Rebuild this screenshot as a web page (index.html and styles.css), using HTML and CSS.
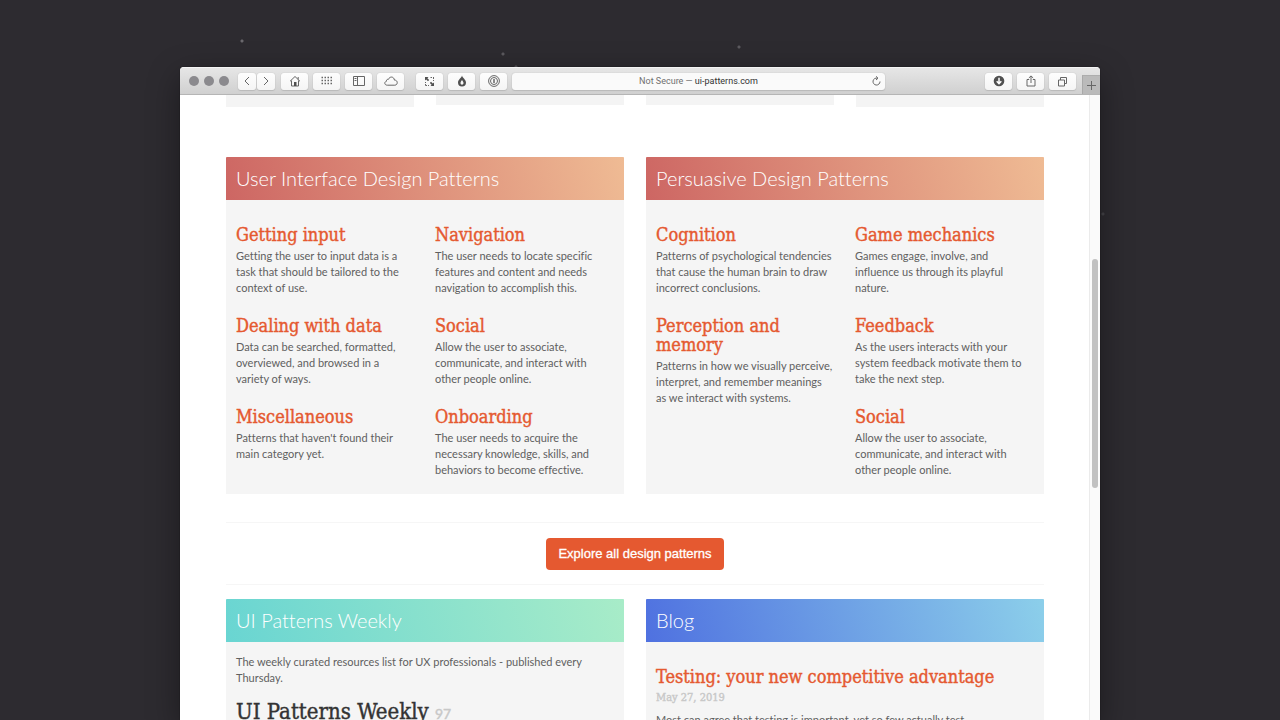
FILE: index.html
```html
<!DOCTYPE html>
<html lang="en">
<head>
<meta charset="utf-8">
<title>UI Patterns</title>
<link rel="stylesheet" href="styles.css">
</head>
<body>
<div class="desktop">
  <div class="window">
    <header class="toolbar">
      <div class="lights"><span></span><span></span><span></span></div>
      <div class="nav-pair">
        <button class="tool" aria-label="Back"><svg width="8" height="10" viewBox="0 0 8 10"><path d="M6 1 2 5l4 4"/></svg></button>
        <button class="tool" aria-label="Forward"><svg width="8" height="10" viewBox="0 0 8 10"><path d="m2 1 4 4-4 4"/></svg></button>
      </div>
      <div class="group">
        <button class="tool" aria-label="Home"><svg width="12" height="12" viewBox="0 0 12 12"><path d="M1 6.300 6 1.500l5 4.800M2.500 5.500V11h7V5.500M9.200 2v2.500"/><path class="solid" d="M5 7h2.500v4H5z"/></svg></button>
        <button class="tool" aria-label="Top sites"><svg width="12" height="10" viewBox="0 0 12 10"><path class="dots" d="M.5 1.500h11M.5 4.500h11M.5 7.500h11"/></svg></button>
        <button class="tool" aria-label="Sidebar"><svg width="12" height="10" viewBox="0 0 12 10"><path d="M.5.5h11v9H.5zM4.500.5v9M1.500 2.500h2M1.500 4.500h2"/></svg></button>
        <button class="tool" aria-label="iCloud tabs"><svg width="14" height="10" viewBox="0 0 14 10"><path d="M3.300 9.200C.4 9.200-.1 5.900 2.400 5.300 2.300 3.500 3.700 3 4.500 3.300 5.500.200 10 .200 10.400 4.100c3.700-.2 3.700 5.100.4 5.100z"/></svg></button>
      </div>
      <div class="group extensions">
        <button class="tool" aria-label="Full page"><svg width="11" height="11" viewBox="0 0 11 11"><path class="solid" d="M1 1h3.500L3.400 2.200 5.200 4 4 5.200 2.200 3.400 1 4.500zM10 10H6.500l1.100-1.200L5.800 7 7 5.800l1.800 1.800L10 6.500z"/><path d="M6.500 1.500H8M9.500 1v2M9.500 4v1M1.500 6v1M1.500 8v1.500H3M4 9.500h1"/></svg></button>
        <button class="tool" aria-label="Raindrop"><svg width="10" height="12" viewBox="0 0 10 12"><path class="solid" fill-rule="evenodd" d="M5 .5C5.500 3 9 4.500 9 7.600a4 4 0 0 1-8 0C1 4.500 4.500 3 5 .5zM5 5C4.300 6 3.500 7 3.500 8.100c0 2.200 3 2.200 3 0C6.500 7 5.700 6 5 5z"/></svg></button>
        <button class="tool" aria-label="1Password"><svg width="12" height="12" viewBox="0 0 12 12"><circle cx="6" cy="6" r="5.400"/><circle cx="6" cy="6" r="3.500"/><path class="bar" d="M6 4v4"/></svg></button>
      </div>
      <div class="address">
        <button class="location"><span>Not Secure — </span>ui-patterns.com</button>
        <button class="reload" aria-label="Reload"><svg width="9" height="10" viewBox="0 0 9 10"><path d="M5.500 2.200A3.500 3.500 0 1 0 8 5.500M4 .3l2 1.900-2 1.800"/></svg></button>
      </div>
      <div class="group actions">
        <button class="tool" aria-label="Downloads"><svg width="12" height="12" viewBox="0 0 12 12"><circle class="solid" cx="6" cy="6" r="5.300"/><path class="arrow" d="M6 2.800v5.500M3.700 6.300 6 8.700l2.300-2.400"/></svg></button>
        <button class="tool" aria-label="Share"><svg width="10" height="12" viewBox="0 0 10 12"><path d="M3.200 4.500H1v6.500h8V4.500H6.800M5 8V1M2.800 3 5 .9 7.200 3"/></svg></button>
        <button class="tool" aria-label="Show tabs"><svg width="11" height="11" viewBox="0 0 11 11"><path d="M1.500 4h6v6h-6zM3.500 4V1.500h6v6h-2"/></svg></button>
      </div>
      <button class="new-tab" aria-label="New tab"><svg width="9" height="9" viewBox="0 0 9 9"><path d="M4.500 0v9M0 4.500h9"/></svg></button>
    </header>

    <div class="viewport">
      <main class="page">
        <div class="previous"><div class="tile tall"></div><div class="tile"></div><div class="tile"></div><div class="tile tall"></div></div>

        <div class="row">
          <section class="card">
            <h2 class="card-title coral">User Interface Design Patterns</h2>
            <div class="columns">
              <div class="column">
                <article><h3><a href="#">Getting input</a></h3><p>Getting the user to input data is a task that should be tailored to the context of use.</p></article>
                <article><h3><a href="#">Dealing with data</a></h3><p>Data can be searched, formatted, overviewed, and browsed in a variety of ways.</p></article>
                <article><h3><a href="#">Miscellaneous</a></h3><p>Patterns that haven't found their main category yet.</p></article>
              </div>
              <div class="column">
                <article><h3><a href="#">Navigation</a></h3><p>The user needs to locate specific features and content and needs navigation to accomplish this.</p></article>
                <article><h3><a href="#">Social</a></h3><p>Allow the user to associate, communicate, and interact with other people online.</p></article>
                <article><h3><a href="#">Onboarding</a></h3><p>The user needs to acquire the necessary knowledge, skills, and behaviors to become effective.</p></article>
              </div>
            </div>
          </section>
          <section class="card">
            <h2 class="card-title coral">Persuasive Design Patterns</h2>
            <div class="columns">
              <div class="column">
                <article><h3><a href="#">Cognition</a></h3><p>Patterns of psychological tendencies that cause the human brain to draw incorrect conclusions.</p></article>
                <article><h3><a href="#">Perception and memory</a></h3><p>Patterns in how we visually perceive, interpret, and remember meanings as we interact with systems.</p></article>
              </div>
              <div class="column">
                <article><h3><a href="#">Game mechanics</a></h3><p>Games engage, involve, and influence us through its playful nature.</p></article>
                <article><h3><a href="#">Feedback</a></h3><p>As the users interacts with your system feedback motivate them to take the next step.</p></article>
                <article><h3><a href="#">Social</a></h3><p>Allow the user to associate, communicate, and interact with other people online.</p></article>
              </div>
            </div>
          </section>
        </div>

        <div class="explore"><a class="cta" href="#">Explore all design patterns</a></div>

        <div class="row">
          <section class="card">
            <h2 class="card-title teal">UI Patterns Weekly</h2>
            <div class="weekly">
              <p>The weekly curated resources list for UX professionals - published every Thursday.</p>
              <h3 class="issue">UI Patterns Weekly <small>97</small></h3>
            </div>
          </section>
          <section class="card">
            <h2 class="card-title blue">Blog</h2>
            <article class="post">
              <h3><a href="#">Testing: your new competitive advantage</a></h3>
              <time datetime="2019-05-27">May 27, 2019</time>
              <p>Most can agree that testing is important, yet so few actually test.</p>
            </article>
          </section>
        </div>
      </main>
      <div class="scrollbar"><div class="thumb"></div></div>
    </div>
  </div>
</div>
</body>
</html>
```
FILE: styles.css
```css
* { box-sizing: border-box; }
body { margin: 0; background: #2d2b30; }
h2, h3, p { margin: 0; }
button { font: inherit; margin: 0; padding: 0; border: 0; }
a { color: inherit; text-decoration: none; }

.desktop {
  height: 100vh;
  padding: 67px 180px 0;
  overflow: hidden;
  display: flex;
  background:
    radial-gradient(circle at 242px 41px, #6b696e 1px, transparent 2px),
    radial-gradient(circle at 503px 54px, #5b595e 1px, transparent 2px),
    radial-gradient(circle at 516px 67px, #5b595e 1px, transparent 2px),
    radial-gradient(circle at 739px 47px, #5b595e 1px, transparent 2px),
    radial-gradient(circle at 1103px 214px, #454348 1px, transparent 2px),
    #2d2b30;
}
.window {
  flex: 1;
  min-width: 0;
  display: flex;
  flex-direction: column;
  border-radius: 4px 4px 0 0;
  overflow: hidden;
  background: #fff;
  box-shadow: 0 10px 32px rgba(0, 0, 0, .4), 0 0 1px #000;
}

/* Browser toolbar */
.toolbar {
  flex: none;
  display: flex;
  align-items: center;
  height: 28px;
  padding-left: 9px;
  background: linear-gradient(#e6e6e6, #d0d0d0);
  border-top: 1px solid #f4f4f4;
  border-bottom: 1px solid #b5b5b5;
}
.lights { display: flex; gap: 5px; margin-right: 9px; }
.lights span { width: 10px; height: 10px; border-radius: 50%; background: #8b8a8e; }
.nav-pair { display: flex; gap: 1px; margin-right: 6px; }
.nav-pair .tool { width: 18px; }
.group { display: flex; gap: 5px; }
.tool {
  display: flex;
  align-items: center;
  justify-content: center;
  width: 27px;
  height: 17px;
  border-radius: 3px;
  background: linear-gradient(#fdfdfd, #f5f5f5);
  box-shadow: 0 0 1px #aaa, 0 1px 1px #bbb;
}
.toolbar svg { display: block; fill: none; stroke: #666; stroke-width: 1; }
.toolbar .solid { fill: #505050; stroke: none; }
.toolbar .dots { stroke-width: 1.5; stroke-dasharray: 1.5 1.5; }
.toolbar .bar { stroke-width: 1.5; }
.toolbar .arrow { stroke: #fff; stroke-width: 1.5; }
.extensions { margin: 0 5px 0 12px; }
.address {
  flex: 1;
  display: flex;
  align-items: center;
  height: 17px;
  padding: 0 4px 0 13px;
  border-radius: 3px;
  background: #fafafa;
  box-shadow: 0 0 1px #aaa, 0 1px 1px #bbb;
}
.location { flex: 1; background: none; color: #333; font: 9px/17px Roboto, "Liberation Sans", sans-serif; }
.location span { color: #707070; }
.reload { background: none; }
.actions { margin: 0 6px 0 100px; }
.new-tab {
  align-self: flex-end;
  display: flex;
  align-items: center;
  justify-content: center;
  width: 18px;
  height: 19px;
  background: #bababa;
  border-left: 1px solid #a9a9a9;
  border-top: 1px solid #adadad;
}

/* Page */
.viewport { flex: 1; min-height: 0; display: flex; }
.page {
  flex: 1;
  min-width: 0;
  padding: 0 45px 0 46px;
  overflow: hidden;
  color: #606060;
  font: 11px/16px Lato, sans-serif;
  font-variant-ligatures: none;
}
.previous { display: grid; grid-template-columns: repeat(4, 1fr); gap: 22px; align-items: start; height: 62px; }
.tile { height: 10px; background: #f4f4f4; }
.tile.tall { height: 12px; }
.row { display: grid; grid-template-columns: 1fr 1fr; gap: 22px; }
.card { background: #f5f5f5; }
.card-title {
  padding: 8px 10px 9px;
  border-radius: 1px 1px 0 0;
  color: #fff;
  font-size: 20px;
  font-weight: 300;
  line-height: 26px;
}
.coral { background: linear-gradient(75deg, #cd6663, #efbb94); }
.teal { background: linear-gradient(75deg, #69d5d2, #a8ecc8); }
.blue { background: linear-gradient(75deg, #4f71e0, #8ccfea); }
.columns { display: grid; grid-template-columns: 1fr 1fr; padding: 25px 0 16px; }
.column { display: flex; flex-direction: column; gap: 20px; padding: 0 12px 0 10px; }
h3 {
  font: 500 18px/19px "Roboto Slab", "DejaVu Serif Condensed", "DejaVu Serif", serif;
  -webkit-text-stroke: 0.4px currentColor;
}
h3 a { color: #e55930; }
article h3 { margin-bottom: 4px; }
.explore {
  display: flex;
  justify-content: center;
  margin: 28px 0 14px;
  padding: 15px 0 14px;
  border-top: 1px solid #f6f6f6;
  border-bottom: 1px solid #f6f6f6;
}
.cta {
  padding: 8px 12px;
  border-radius: 4px;
  background: #e55930;
  color: #fff;
  font: 13px/16px "Liberation Sans", sans-serif;
  -webkit-text-stroke: 0.3px #fff;
}
.weekly { padding: 12px 10px; }
.issue { margin-top: 13px; color: #333; font-size: 22px; line-height: 25px; }
.issue small { color: #c8c8c8; font: 14px Lato, sans-serif; }
.post { padding: 25px 10px; }
.post time {
  display: block;
  margin-bottom: 6px;
  color: #c8c8c8;
  font: 500 11px/16px "Roboto Slab", "DejaVu Serif Condensed", serif;
  -webkit-text-stroke: 0.4px currentColor;
}

.scrollbar { flex: none; width: 11px; padding: 164px 2px 0; background: #fafafa; border-left: 1px solid #ebebeb; }
.thumb { width: 6px; height: 229px; border-radius: 3px; background: #c1c1c1; }
```
